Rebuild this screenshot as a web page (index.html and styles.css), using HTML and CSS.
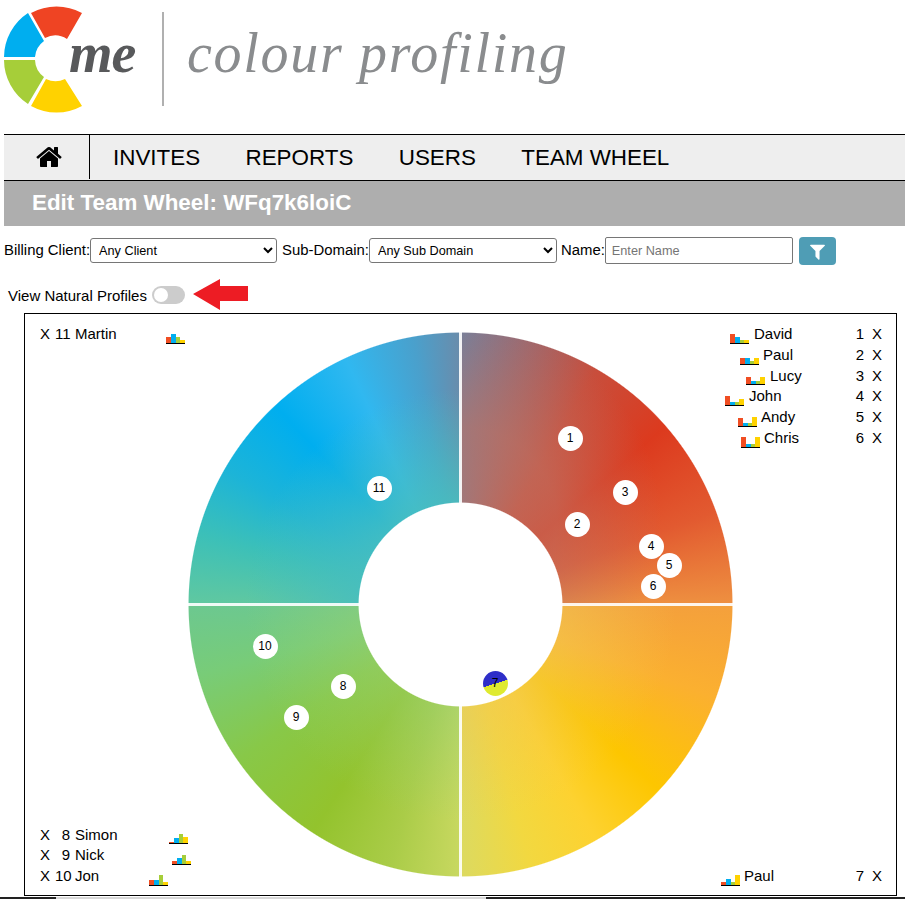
FILE: index.html
```html
<!DOCTYPE html>
<html lang="en">
<head>
<meta charset="utf-8">
<title>Edit Team Wheel</title>
<link rel="stylesheet" href="styles.css">
</head>
<body>
<header class="brand">
  <div class="logo">
    <svg class="logo-wheel" viewBox="0 0 114 114" width="114" height="114" aria-hidden="true">
      <path fill="#ef4423" d="M31 13 A53 53 0 0 1 82 13 L67 39 A22 22 0 0 0 45 38 Z"/>
      <path fill="#00aeef" d="M4 57 A53 53 0 0 1 28 13 L44 41 A22 22 0 0 0 35 57 Z"/>
      <path fill="#a6ce39" d="M4 60 A53 53 0 0 0 28 104 L44 77 A22 22 0 0 1 35 60 Z"/>
      <path fill="#ffd200" d="M31 106 A53 53 0 0 0 82 106 L65 79 A22 22 0 0 1 46 79 Z"/>
    </svg>
    <span class="logo-me">me</span>
  </div>
  <span class="brand-rule"></span>
  <span class="brand-name">colour profiling</span>
</header>

<nav class="nav">
  <a class="nav-home" aria-label="Home">
    <svg viewBox="0 0 1792 1792" width="28" height="28"><path d="M1408 992v480q0 26-19 45t-45 19h-384v-384h-256v384h-384q-26 0-45-19t-19-45v-480q0-1 .5-3t.5-3l575-474 575 474q1 2 1 6zm223-69l-62 74q-8 9-21 11h-3q-13 0-21-7l-692-577-692 577q-12 8-24 7-13-2-21-11l-62-74q-8-10-7-23.5t11-22.5l719-599q32-26 76-26t76 26l244 204v-195q0-14 9-23t23-9h192q14 0 23 9t9 23v408l219 182q10 8 11 21.5t-7 23.5z"/></svg>
  </a>
  <a class="nav-link">INVITES</a>
  <a class="nav-link">REPORTS</a>
  <a class="nav-link">USERS</a>
  <a class="nav-link">TEAM WHEEL</a>
</nav>

<h1 class="title">Edit Team Wheel: WFq7k6loiC</h1>

<form class="filters">
  <label class="filter-label">Billing Client:</label>
  <select class="filter-select"><option>Any Client</option></select>
  <label class="filter-label filter-label-sub">Sub-Domain:</label>
  <select class="filter-select filter-select-sub"><option>Any Sub Domain</option></select>
  <label class="filter-label filter-label-name">Name:</label>
  <input class="filter-input" type="text" placeholder="Enter Name">
  <button class="filter-button" type="button" aria-label="Filter">
    <svg viewBox="0 0 1792 1792" width="19" height="19"><path fill="#fff" d="M1595 295q17 41-14 70l-493 493v742q0 42-39 59-13 5-25 5-27 0-45-19l-256-256q-19-19-19-45v-486l-493-493q-31-29-14-70 17-39 59-39h1280q42 0 59 39z"/></svg>
  </button>
</form>

<div class="natural">
  <span>View Natural Profiles</span>
  <span class="switch"><span class="switch-knob"></span></span>
  <svg class="arrow" viewBox="0 0 56 32" width="56" height="32" aria-hidden="true"><path fill="#ed1c24" d="M0 15 L27 0 V7 H55 V22 H27 V31 Z"/></svg>
</div>

<main class="panel">
  <div class="wheel">
    <div class="ring"></div>
    <span class="split split-v"></span>
    <span class="split split-h"></span>
    <span class="pin" style="left:381px;top:105px">1</span>
    <span class="pin" style="left:388px;top:191px">2</span>
    <span class="pin" style="left:436px;top:159px">3</span>
    <span class="pin" style="left:462px;top:213px">4</span>
    <span class="pin" style="left:480px;top:232px">5</span>
    <span class="pin" style="left:464px;top:253px">6</span>
    <span class="pin pin-natural" style="left:306px;top:350px">7</span>
    <span class="pin" style="left:154px;top:353px">8</span>
    <span class="pin" style="left:107px;top:384px">9</span>
    <span class="pin" style="left:76px;top:313px">10</span>
    <span class="pin" style="left:190px;top:155px">11</span>
  </div>

  <div class="list list-top-left">
    <div class="row">
      <span class="x">X</span><span class="num">11</span><span class="name">Martin</span>
      <span class="bars" style="left:126px"><i class="r" style="height:6px"></i><i class="b" style="height:9px"></i><i class="g" style="height:6px"></i><i class="y" style="height:3px"></i></span>
    </div>
  </div>

  <div class="list list-bottom-left">
    <div class="row">
      <span class="x">X</span><span class="num">8</span><span class="name">Simon</span>
      <span class="bars" style="left:129px"><i class="r" style="height:1px"></i><i class="b" style="height:5px"></i><i class="g" style="height:9px"></i><i class="y" style="height:6px"></i></span>
    </div>
    <div class="row">
      <span class="x">X</span><span class="num">9</span><span class="name">Nick</span>
      <span class="bars" style="left:132px"><i class="r" style="height:3px"></i><i class="b" style="height:6px"></i><i class="g" style="height:9px"></i><i class="y" style="height:3px"></i></span>
    </div>
    <div class="row">
      <span class="x">X</span><span class="num">10</span><span class="name">Jon</span>
      <span class="bars" style="left:109px"><i class="r" style="height:5px"></i><i class="b" style="height:5px"></i><i class="g" style="height:10px"></i><i class="y" style="height:3px"></i></span>
    </div>
  </div>

  <div class="list list-top-right">
    <div class="row row-right">
      <span class="bars" style="left:5px"><i class="r" style="height:9px"></i><i class="b" style="height:6px"></i><i class="g" style="height:3px"></i><i class="y" style="height:3px"></i></span>
      <span class="name" style="left:29px">David</span><span class="num">1</span><span class="x">X</span>
    </div>
    <div class="row row-right">
      <span class="bars" style="left:15px"><i class="r" style="height:6px"></i><i class="b" style="height:6px"></i><i class="g" style="height:3px"></i><i class="y" style="height:6px"></i></span>
      <span class="name" style="left:38px">Paul</span><span class="num">2</span><span class="x">X</span>
    </div>
    <div class="row row-right">
      <span class="bars" style="left:21px"><i class="r" style="height:7px"></i><i class="b" style="height:3px"></i><i class="g" style="height:3px"></i><i class="y" style="height:7px"></i></span>
      <span class="name" style="left:45px">Lucy</span><span class="num">3</span><span class="x">X</span>
    </div>
    <div class="row row-right">
      <span class="bars" style="left:0"><i class="r" style="height:9px"></i><i class="b" style="height:3px"></i><i class="g" style="height:3px"></i><i class="y" style="height:6px"></i></span>
      <span class="name" style="left:24px">John</span><span class="num">4</span><span class="x">X</span>
    </div>
    <div class="row row-right">
      <span class="bars" style="left:13px"><i class="r" style="height:8px"></i><i class="b" style="height:3px"></i><i class="g" style="height:3px"></i><i class="y" style="height:9px"></i></span>
      <span class="name" style="left:36px">Andy</span><span class="num">5</span><span class="x">X</span>
    </div>
    <div class="row row-right">
      <span class="bars" style="left:16px"><i class="r" style="height:10px"></i><i class="b" style="height:3px"></i><i class="g" style="height:3px"></i><i class="y" style="height:10px"></i></span>
      <span class="name" style="left:39px">Chris</span><span class="num">6</span><span class="x">X</span>
    </div>
  </div>

  <div class="list list-bottom-right">
    <div class="row row-right">
      <span class="bars" style="left:-4px"><i class="r" style="height:3px"></i><i class="b" style="height:6px"></i><i class="g" style="height:3px"></i><i class="y" style="height:10px"></i></span>
      <span class="name" style="left:19px">Paul</span><span class="num">7</span><span class="x">X</span>
    </div>
  </div>
</main>
<div class="strip"></div>
</body>
</html>
```

FILE: styles.css
```css
* { box-sizing: border-box; }

html, body {
  margin: 0;
  height: 899px;
  overflow: hidden;
  background: #fff;
}

body {
  font-family: "Liberation Sans", Arial, sans-serif;
  font-size: 15px;
  color: #000;
}

/* Brand header */
.brand {
  display: flex;
  align-items: flex-start;
  height: 134px;
}

.logo {
  position: relative;
  width: 162px;
  height: 114px;
}

.logo-wheel { display: block; }

.logo-me {
  position: absolute;
  left: 69px;
  top: 25px;
  font: italic bold 56px/56px "Liberation Serif", serif;
  color: #58595b;
  letter-spacing: -1px;
}

.brand-rule {
  width: 2px;
  height: 94px;
  margin-top: 12px;
  background: #b0b0b0;
}

.brand-name {
  margin: 18px 0 0 23px;
  font: italic 400 56px/70px "Liberation Serif", serif;
  letter-spacing: 1.7px;
  color: #8a8c8e;
  white-space: nowrap;
}

/* Navigation */
.nav {
  display: flex;
  align-items: center;
  height: 47px;
  margin-left: 4px;
  background: #eee;
  border-top: 1px solid #000;
  border-bottom: 1px solid #000;
}

.nav-home {
  display: flex;
  align-items: center;
  justify-content: center;
  width: 86px;
  height: 44px;
  margin-bottom: 1px;
  padding-left: 7px;
  border-right: 1px solid #000;
}

.nav-home svg { display: block; }

.nav-link {
  margin-left: 23px;
  margin-right: 22.4px;
  font-size: 22.4px;
  color: #000;
  white-space: nowrap;
}

/* Page title */
.title {
  height: 45px;
  margin: 0 0 0 4px;
  padding-left: 28px;
  font-size: 22.4px;
  font-weight: 700;
  line-height: 43px;
  color: #fff;
  background: #aeaeae;
}

/* Filters */
.filters {
  display: flex;
  align-items: flex-start;
  height: 28px;
  margin: 11px 0 0 4px;
  font-size: 14.9px;
}

.filter-label {
  line-height: 26px;
  white-space: nowrap;
}

.filter-label-sub { margin-left: 5px; }
.filter-label-name { margin-left: 4px; }

.filter-select {
  width: 187px;
  height: 25px;
  margin-top: 1px;
  padding-left: 4px;
  font: 12.7px "Liberation Sans", Arial, sans-serif;
  color: #000;
  background: #fff;
  border: 1px solid #767676;
  border-radius: 3px;
}

.filter-select-sub { width: 188px; }

.filter-input {
  width: 188px;
  height: 27px;
  padding: 0 6px;
  font: 12.7px "Liberation Sans", Arial, sans-serif;
  border: 1px solid #767676;
  border-radius: 2px;
}

.filter-input::placeholder { color: #757575; }

.filter-button {
  display: flex;
  align-items: center;
  justify-content: center;
  width: 37px;
  height: 28px;
  margin-left: 6px;
  padding: 0;
  background: #4f9db5;
  border: 0;
  border-radius: 4px;
}

/* Natural profile toggle */
.natural {
  display: flex;
  align-items: center;
  height: 18px;
  margin: 21px 0 0 8px;
}

.switch {
  display: flex;
  align-items: center;
  width: 33px;
  height: 18px;
  margin-left: 5px;
  padding-left: 2px;
  background: #ccc;
  border-radius: 9px;
}

.switch-knob {
  width: 14px;
  height: 14px;
  background: #fff;
  border-radius: 50%;
}

.arrow {
  flex: none;
  margin-left: 8px;
}

/* Wheel panel */
.panel {
  position: relative;
  width: 873px;
  height: 583px;
  margin: 9px 0 0 24px;
  padding-top: 18px;
  border: 1px solid #000;
}

.wheel {
  position: relative;
  width: 545px;
  height: 545px;
  margin: 0 auto;
}

.ring {
  width: 100%;
  height: 100%;
  background:
    radial-gradient(circle 215px at 100% 100%, rgba(72,190,190,.85) 48%, rgba(72,190,190,0) 100%) 0 0 / 50% 50% no-repeat,
    radial-gradient(circle 200px at 0 70%, rgba(190,115,100,.6) 48%, rgba(190,115,100,0) 100%) 100% 0 / 50% 50% no-repeat,
    radial-gradient(circle 215px at 0 0, rgba(240,200,85,.55) 48%, rgba(240,200,85,0) 100%) 100% 100% / 50% 50% no-repeat,
    radial-gradient(circle 215px at 100% 0, rgba(150,208,115,.5) 48%, rgba(150,208,115,0) 100%) 0 100% / 50% 50% no-repeat,
    conic-gradient(
      #75809c 0deg, #a0686c 15deg, #c84e3c 30deg, #dc3a1e 49deg, #e25a30 70deg, #ee9040 90deg,
      #f4a03c 90deg, #fbb030 110deg, #fdc600 133deg, #fdd230 150deg, #f2d840 165deg, #dcda60 180deg,
      #c8d860 180deg, #aacc48 195deg, #93c32d 213deg, #88c848 235deg, #78cc78 255deg, #6cc890 270deg,
      #60c8a0 270deg, #3cc0b8 285deg, #1cb4d8 300deg, #00aeef 317deg, #30b8f0 335deg, #4aa0cc 350deg, #6a8cab 360deg
    );
  -webkit-mask: radial-gradient(circle closest-side, transparent 37.2%, #000 37.6%, #000 99.6%, transparent 100%);
  mask: radial-gradient(circle closest-side, transparent 37.2%, #000 37.6%, #000 99.6%, transparent 100%);
}

.split {
  position: absolute;
  background: rgba(255, 255, 255, .9);
}

.split-v {
  left: 271px;
  top: 0;
  width: 3px;
  height: 100%;
}

.split-h {
  left: 0;
  top: 271px;
  width: 100%;
  height: 3px;
}

.pin {
  position: absolute;
  display: flex;
  align-items: center;
  justify-content: center;
  width: 25px;
  height: 25px;
  margin: -11.5px 0 0 -11.5px;
  font-size: 12px;
  color: #000;
  background: #fff;
  border-radius: 50%;
}

.pin-natural {
  background: linear-gradient(163deg, #2e2ec8 50%, #dfea30 50%);
}

/* Name lists */
.list { position: absolute; }

.list-top-left { left: 15px; top: 10px; }
.list-bottom-left { left: 15px; bottom: 8px; }
.list-top-right { left: 700px; top: 10px; }
.list-bottom-right { left: 700px; bottom: 8px; }

.row {
  position: relative;
  display: flex;
  width: 170px;
  height: 20.8px;
  line-height: 20.8px;
  white-space: nowrap;
}

.row .x { width: 10px; }

.row .num {
  width: 15px;
  margin-left: 5px;
  text-align: right;
}

.row .name { margin-left: 5px; }

.row-right .name { position: absolute; margin-left: 0; }

.row-right .num {
  width: 20px;
  margin-left: 119px;
}

.row-right .x { margin-left: 8px; }

.bars {
  position: absolute;
  bottom: 1px;
  display: flex;
  align-items: flex-end;
  width: 19px;
  height: 12px;
  border-bottom: 1px solid #000;
}

.bars i { flex: 1; display: block; }
.bars .r { background: #f04e23; }
.bars .b { background: #00aeef; }
.bars .g { background: #a6ce39; }
.bars .y { background: #ffd200; }

.strip {
  height: 2px;
  margin-top: 1px;
  background: linear-gradient(90deg, #222 0, #222 56px, #d8d8d8 56px, #d8d8d8 486px, #222 486px);
}
```
